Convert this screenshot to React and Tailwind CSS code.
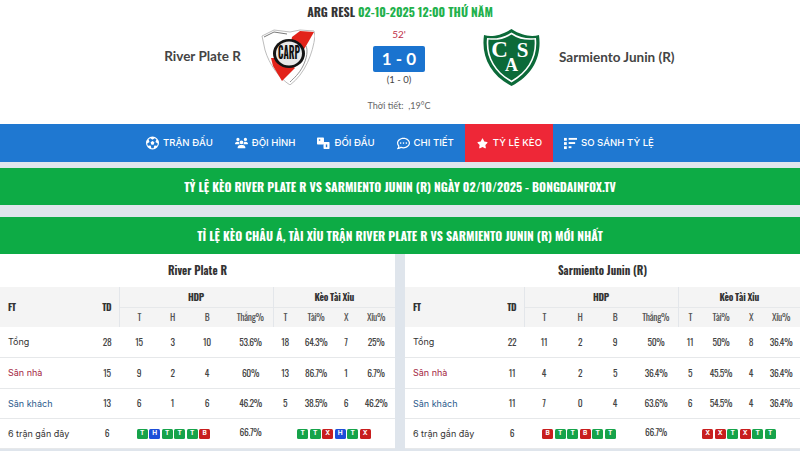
import React from "react";
import { FaRegFutbol, FaUsers, FaStar, FaRegCommentDots } from "react-icons/fa6";

const Cond = "font-['Oswald','Liberation_Sans_Narrow','Liberation_Sans',sans-serif]";
const Head = "font-['Lato',sans-serif]";

function RiverCrest() {
  return (
    <svg width="54" height="57" viewBox="0 0 54 57">
      <path d="M1 8 L13 2 L29 4 L39 2 L53 3 L54 8 C52 25 44 46 29 57 C18 50 8 36 4 22 Z" fill="#fff" stroke="#bdbdbd" strokeWidth="1" />
      <path d="M3 9 L13 4 L26 6" fill="none" stroke="#555" strokeWidth="0.8" />
      <path d="M31 9 L39 3 L53 4 L45 18 L38 29 L28 24 Z" fill="#e2231a" />
      <path d="M10 30 L20 30 L29 36 L34 40 L21 53 L12 38 Z" fill="#e2231a" />
      <path d="M45 18 C47 22 46 30 42 38 C38 46 33 50 29 54" fill="none" stroke="#777" strokeWidth="0.8" />
      <ellipse cx="28" cy="25.5" rx="16" ry="14.5" fill="#141414" />
      <ellipse cx="28" cy="25.5" rx="13" ry="12" fill="#e9e9e9" />
      <text x="28" y="31" textAnchor="middle" fontSize="16" fontWeight="700" fill="#111" textLength="22" lengthAdjust="spacingAndGlyphs" fontFamily="'Oswald','Liberation Sans',sans-serif">CARP</text>
    </svg>
  );
}

function SarmientoCrest() {
  return (
    <svg width="57" height="58" viewBox="0 0 57 58">
      <path d="M1 7 C8 9 17 8 28.5 1 C39 8 49 9 56 7 C59 28 50 47 28.5 58 C7 47 -2 28 1 7 Z" fill="#0c6a39" />
      <path d="M4 10 C12 11 20 10 28.5 4.5 C37 10 45 11 53 10 C55 28 47 44 28.5 54.5 C10 44 2 28 4 10 Z" fill="#fff" />
      <path d="M5.5 11.5 C13 12.5 21 11.5 28.5 6.5 C36 11.5 44 12.5 51.5 11.5 C53 28 45 43 28.5 52.5 C12 43 4 28 5.5 11.5 Z" fill="#0c6a39" />
      <text x="16.5" y="29" textAnchor="middle" fontSize="23" fontWeight="700" fill="#fff" fontFamily="'Liberation Serif',serif">C</text>
      <text x="39.5" y="29" textAnchor="middle" fontSize="21" fontWeight="700" fill="#fff" fontFamily="'Liberation Serif',serif">S</text>
      <text x="28.5" y="43" textAnchor="middle" fontSize="18" fontWeight="700" fill="#fff" fontFamily="'Liberation Serif',serif">A</text>
    </svg>
  );
}

function VsIcon() {
  return (
    <svg width="14" height="13" viewBox="0 0 14 13" fill="currentColor">
      <rect x="0" y="0" width="7.5" height="7.5" rx="0.8" />
      <rect x="7" y="5" width="6.5" height="7.5" rx="0.8" />
      <rect x="2" y="2" width="1.5" height="1.5" fill="#1f78d1" />
      <rect x="9.5" y="7.5" width="1.5" height="3" fill="#1f78d1" />
    </svg>
  );
}

function ListIcon() {
  return (
    <svg width="14" height="13" viewBox="0 0 14 13" fill="currentColor">
      <rect x="0" y="0.5" width="3" height="3" />
      <rect x="0" y="5" width="3" height="3" />
      <rect x="0" y="9.5" width="3" height="3" />
      <rect x="5" y="0.5" width="9" height="2" />
      <rect x="5" y="5" width="7" height="2" />
      <rect x="5" y="9.5" width="3" height="2" />
    </svg>
  );
}

const nav = [
  [<FaRegFutbol className="text-[14px]" />, "TRẬN ĐẤU"],
  [<FaUsers className="text-[14px]" />, "ĐỘI HÌNH"],
  [<VsIcon />, "ĐỐI ĐẦU"],
  [<FaRegCommentDots className="text-[13px]" />, "CHI TIẾT"],
  [<FaStar className="text-[11px]" />, "TỶ LỆ KÈO", true],
  [<ListIcon />, "SO SÁNH TỶ LỆ"],
];

const badgeColor = { T: "bg-[#16a34a]", H: "bg-[#1d4ed8]", B: "bg-[#c81e1e]", X: "bg-[#c81e1e]" };

function Badges({ s }) {
  return (
    <div className="flex justify-center gap-[1.5px] tracking-normal">
      {s.split("").map((c, i) => (
        <span key={i} className={`${badgeColor[c]} flex h-[10px] w-[11px] items-center justify-center rounded-[1.5px] font-['Inter',sans-serif] text-[6.5px] font-bold leading-none text-white`}>
          {c}
        </span>
      ))}
    </div>
  );
}

const labelColor = ["text-[#333]", "text-[#a3263f]", "text-[#2a5a8c]", "text-[#333]"];

function Side({ name, rows, form1, form2, cols }) {
  const border = "border-l border-[#e3e6ea]";
  const sub = "text-[9.5px] font-normal text-[#555]";
  const top = "text-[9.5px] font-bold text-[#333]";
  const label = "whitespace-nowrap pl-2 text-left font-['Inter',sans-serif] text-[9px] tracking-normal";
  return (
    <div className="min-w-0 flex-1 bg-white">
      <div className={`${Cond} flex h-[33px] items-center justify-center text-[11px] font-bold text-[#333]`}>{name}</div>
      <table className={`${Cond} w-full table-fixed border-collapse text-center text-[9.5px] tracking-[-0.3px] text-[#444]`}>
        <colgroup>
          <col className="w-[95px]" />
          <col className="w-[24px]" />
          <col className={cols[0]} />
          <col className={cols[1]} />
          <col className={cols[2]} />
          <col className={cols[3]} />
          <col className="w-[24px]" />
          <col className="w-[38px]" />
          <col className="w-[22px]" />
          <col />
        </colgroup>
        <thead className="bg-[#f4f4f4]">
          <tr className="h-[20px] border-b border-[#e6e8ea]">
            <th rowSpan={2} className={`pl-2 text-left ${top}`}>FT</th>
            <th rowSpan={2} className={top}>TD</th>
            <th colSpan={4} className={`${border} ${top}`}>HDP</th>
            <th colSpan={4} className={`${border} ${top}`}>Kèo Tài Xỉu</th>
          </tr>
          <tr className="h-[20px]">
            <th className={`${border} ${sub}`}>T</th>
            <th className={sub}>H</th>
            <th className={sub}>B</th>
            <th className={sub}>Thắng%</th>
            <th className={`${border} ${sub}`}>T</th>
            <th className={sub}>Tài%</th>
            <th className={sub}>X</th>
            <th className={sub}>Xỉu%</th>
          </tr>
        </thead>
        <tbody>
          {rows.map((r, i) => (
            <tr key={i} className="h-[30.5px] border-b border-[#e6e8ea]">
              <td className={`${label} ${labelColor[i]}`}>{r[0]}</td>
              {r.slice(1).map((v, j) => <td key={j}>{v}</td>)}
            </tr>
          ))}
          <tr className="h-[30px] border-b border-[#e6e8ea]">
            <td className={`${label} text-[#333]`}>6 trận gần đây</td>
            <td>6</td>
            <td colSpan={3}><Badges s={form1} /></td>
            <td className="pb-0.5">66.7%</td>
            <td colSpan={4}><Badges s={form2} /></td>
          </tr>
        </tbody>
      </table>
    </div>
  );
}

export default function App() {
  return (
    <div className="h-[451px] w-[800px] overflow-hidden bg-[#dfe5ec]">
      <div className="h-[124px] bg-white">
        <div className={`${Cond} flex h-[24px] items-center justify-center gap-[3px] text-[12px] font-bold`}>
          <span className="text-[#333]">ARG RESL</span>
          <span className="text-[#22b14c]">02-10-2025 12:00 THỨ NĂM</span>
        </div>
        <div className="grid grid-cols-[315px_168px_1fr] items-start">
          <div className="flex items-center justify-end gap-[20px] pt-[4px]">
            <span className={`${Head} text-[13.5px] font-bold text-[#444]`}>River Plate R</span>
            <RiverCrest />
          </div>
          <div className="flex flex-col items-center pt-[5px]">
            <span className={`${Head} text-[10px] leading-none text-[#c0304a]`}>52'</span>
            <span className={`${Head} mt-[7px] flex h-[26px] w-[52px] items-center justify-center rounded-[2px] bg-[#1a73cf] text-[17px] font-bold text-white`}>1 - 0</span>
            <span className={`${Head} mt-[2px] text-[9.5px] leading-3 text-[#444]`}>(1 - 0)</span>
            <span className={`${Head} mt-[14px] whitespace-pre text-[9px] leading-3 text-[#666]`}>Thời tiết:  ,19°C</span>
          </div>
          <div className="flex items-center gap-[19px] pt-[4px]">
            <SarmientoCrest />
            <span className={`${Head} text-[13.5px] font-bold text-[#444]`}>Sarmiento Junin (R)</span>
          </div>
        </div>
      </div>
      <nav className="flex h-[38px] items-stretch justify-center bg-[#1f78d1] font-['Inter',sans-serif] text-[9.6px] font-medium text-white">
        {nav.map(([icon, label, active], i) => (
          <div key={i} className={`flex items-center gap-[4px] px-[11px] ${active ? "bg-[#ee2737]" : ""}`}>
            <span className="flex w-[13px] justify-center">{icon}</span>
            <span className="whitespace-nowrap">{label}</span>
          </div>
        ))}
      </nav>
      <div className={`${Cond} mt-[6px] flex h-[37px] items-center justify-center bg-[#0dab45] text-[12px] font-bold text-white`}>
        TỶ LỆ KÈO RIVER PLATE R VS SARMIENTO JUNIN (R) NGÀY 02/10/2025 - BONGDAINFOX.TV
      </div>
      <div className={`${Cond} mt-[12px] flex h-[37px] items-center justify-center bg-[#0dab45] text-[12px] font-bold text-white`}>
        TỈ LỆ KÈO CHÂU Á, TÀI XỈU TRẬN RIVER PLATE R VS SARMIENTO JUNIN (R) MỚI NHẤT
      </div>
      <div className="flex gap-[10px]">
        <Side
          name="River Plate R"
          cols={["w-[40px]", "w-[27px]", "w-[42px]", "w-[45px]"]}
          rows={[
            ["Tổng", 28, 15, 3, 10, "53.6%", 18, "64.3%", 7, "25%"],
            ["Sân nhà", 15, 9, 2, 4, "60%", 13, "86.7%", 1, "6.7%"],
            ["Sân khách", 13, 6, 1, 6, "46.2%", 5, "38.5%", 6, "46.2%"],
          ]}
          form1="THTTTB"
          form2="TTXHTX"
        />
        <Side
          name="Sarmiento Junin (R)"
          cols={["w-[40px]", "w-[32px]", "w-[38px]", "w-[44px]"]}
          rows={[
            ["Tổng", 22, 11, 2, 9, "50%", 11, "50%", 8, "36.4%"],
            ["Sân nhà", 11, 4, 2, 5, "36.4%", 5, "45.5%", 4, "36.4%"],
            ["Sân khách", 11, 7, 0, 4, "63.6%", 6, "54.5%", 4, "36.4%"],
          ]}
          form1="BTTBTT"
          form2="XXTXTT"
        />
      </div>
    </div>
  );
}
